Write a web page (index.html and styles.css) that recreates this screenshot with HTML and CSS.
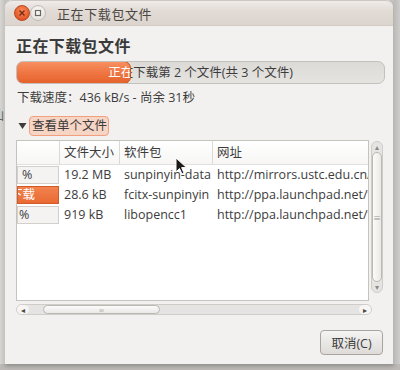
FILE: index.html
```html
<!DOCTYPE html>
<html>
<head>
<meta charset="utf-8">
<link rel="stylesheet" href="styles.css">
</head>
<body>
<div class="desk">
  <div class="side-left"><span class="ghost">汕</span></div>
  <div class="window">
    <div class="titlebar">
      <span class="wbtn close"><svg width="8" height="8" viewBox="0 0 8 8"><path d="M1.5 1.5 L6.5 6.5 M6.5 1.5 L1.5 6.5" stroke="#7a2a10" stroke-width="1.4"/></svg></span>
      <span class="wbtn other"><svg width="8" height="8" viewBox="0 0 8 8"><rect x="1.5" y="1.5" width="5" height="5" fill="none" stroke="#6a6662" stroke-width="1.2"/></svg></span>
      <span class="wtitle">正在下载包文件</span>
    </div>
    <div class="content">
      <div class="heading">正在下载包文件</div>
      <div class="bar">
        <div class="bar-label">正在下载第 2 个文件(共 3 个文件)</div>
        <div class="bar-fill"><div class="bar-label white">正在下载第 2 个文件(共 3 个文件)</div></div>
      </div>
      <div class="speed">下载速度：436 kB/s - 尚余 31秒</div>
      <div class="expander">
        <svg class="tri" width="9" height="8" viewBox="0 0 9 8"><path d="M0.5 1 L8.5 1 L4.5 7 Z" fill="#3c3c3c"/></svg>
        <span class="exp-label">查看单个文件</span>
      </div>
      <div class="tablearea">
        <div class="tablebox">
          <div class="row head">
            <div class="c c1"></div>
            <div class="c c2">文件大小</div>
            <div class="c c3">软件包</div>
            <div class="c c4">网址</div>
          </div>
          <div class="row">
            <div class="c c1"><span class="pcell">%</span></div>
            <div class="c c2">19.2 MB</div>
            <div class="c c3">sunpinyin-data</div>
            <div class="c c4">http://mirrors.ustc.edu.cn/ubuntu</div>
          </div>
          <div class="row">
            <div class="c c1"><span class="pcell orange">正在下载</span></div>
            <div class="c c2">28.6 kB</div>
            <div class="c c3">fcitx-sunpinyin</div>
            <div class="c c4">http://ppa.launchpad.net/fcitx</div>
          </div>
          <div class="row">
            <div class="c c1"><span class="pcell left">%</span></div>
            <div class="c c2">919 kB</div>
            <div class="c c3">libopencc1</div>
            <div class="c c4">http://ppa.launchpad.net/fcitx</div>
          </div>
        </div>
        <div class="vscroll">
          <div class="varrow">▴</div>
          <div class="vthumb"><span class="grip">≡</span></div>
          <div class="varrow">▾</div>
        </div>
      </div>
      <div class="hscroll">
        <div class="harrow">◂</div>
        <div class="htrack">
          <div class="hthumb"><span class="hgrip">ııı</span></div>
        </div>
        <div class="harrow">▸</div>
      </div>
      <div class="buttons">
        <button class="btn">取消(C)</button>
      </div>
    </div>
  </div>
  <div class="side-right"></div>
  <svg class="cursor" width="14" height="20" viewBox="0 0 14 20"><path d="M1 1 L1 15 L4.5 11.5 L7 17 L9 16 L6.6 10.6 L11.5 10.6 Z" fill="#1a1a1a" stroke="#ffffff" stroke-width="1"/></svg>
</div>
</body>
</html>
```

FILE: styles.css
```css
* { box-sizing: border-box; }
html, body { margin: 0; padding: 0; }
body {
  width: 400px;
  height: 370px;
  overflow: hidden;
  background: #bdbab7;
  font-family: "Open Sans", "Noto Sans CJK SC", sans-serif;
  color: #3c3c3c;
}
.desk {
  position: relative;
  display: flex;
  width: 400px;
  height: 370px;
  background: linear-gradient(#c9c7c5, #bcb9b6);
}
.side-left {
  width: 5px;
  height: 364px;
  background: linear-gradient(90deg, #d8d6d3, #c4c2bf);
  overflow: hidden;
  position: relative;
}
.ghost {
  display: block;
  margin-top: 104px;
  margin-left: -9px;
  font-size: 13px;
  color: #666;
}
.side-right {
  flex: 1;
  height: 364px;
  background: linear-gradient(90deg, #bcbab8, #cfcdcb);
}
.window {
  width: 389px;
  height: 364px;
  background: #f2f1f0;
  border-radius: 7px 7px 0 0;
  border-right: 1px solid #b9b5b1;
  box-shadow: 0 2px 4px rgba(0,0,0,0.25);
  display: flex;
  flex-direction: column;
  overflow: hidden;
}
.titlebar {
  height: 26px;
  flex: none;
  display: flex;
  align-items: center;
  padding-left: 9px;
  background: linear-gradient(#efece9, #e2dbd6 40%, #dcd4ce);
  border-bottom: 1px solid #d2cbc5;
  border-top: 1px solid #cdc7c2;
  border-radius: 7px 7px 0 0;
}
.wbtn {
  width: 16px;
  height: 16px;
  border-radius: 50%;
  display: flex;
  align-items: center;
  justify-content: center;
}
.close {
  background: radial-gradient(circle at 50% 35%, #f98a5a, #e4592a 70%, #c9461b);
  border: 1px solid #b8481e;
}
.other {
  background: radial-gradient(circle at 50% 35%, #fbfaf9, #e4e0dc 80%);
  border: 1px solid #c1bbb6;
}
.wtitle {
  margin-left: 11px;
  font-size: 13px;
  letter-spacing: 0.6px;
  color: #4a4642;
  font-family: "Noto Sans CJK SC", sans-serif;
}
.content {
  flex: 1;
  padding: 0 10px 0 11px;
  display: flex;
  flex-direction: column;
}
.heading {
  margin-top: 9px;
  height: 20px;
  line-height: 20px;
  font-size: 16px;
  font-weight: bold;
  letter-spacing: 0.4px;
  color: #3a3a3a;
  font-family: "Noto Sans CJK SC", sans-serif;
}
.bar {
  margin-top: 6px;
  height: 23px;
  width: 369px;
  position: relative;
  border: 1px solid #c4c0bc;
  border-radius: 7px;
  background: linear-gradient(#dcdad7, #e6e4e1);
  overflow: hidden;
}
.bar-label {
  width: 367px;
  height: 21px;
  line-height: 21px;
  text-align: center;
  font-size: 12.5px;
  color: #3c3c3c;
  white-space: nowrap;
}
.bar-label.white { color: #ffffff; }
.bar-fill {
  position: absolute;
  left: -1px;
  top: -1px;
  height: 23px;
  width: 115px;
  border: 1px solid #c9521f;
  border-radius: 7px;
  background: linear-gradient(#f7905f, #ef7643 50%, #e6632c);
  overflow: hidden;
}
.speed {
  margin-top: 5px;
  height: 17px;
  line-height: 17px;
  font-size: 12.5px;
  padding-left: 1px;
  white-space: nowrap;
}
.expander {
  margin-top: 10px;
  height: 20px;
  display: flex;
  align-items: center;
}
.tri { margin-left: 2px; margin-right: 2px; }
.exp-label {
  height: 20px;
  line-height: 18px;
  padding: 0 1px 0 2px;
  font-size: 12.5px;
  border: 1px solid #f0a07e;
  border-radius: 4px;
  background: #f7d5c5;
  color: #3c3c3c;
}
.tablearea {
  margin-top: 4px;
  display: flex;
  gap: 2px;
  height: 161px;
}
.tablebox {
  width: 356px;
  height: 161px;
  background: #ffffff;
  border: 1px solid #c6c2be;
  overflow: hidden;
}
.row {
  display: flex;
  height: 20px;
  line-height: 20px;
  font-size: 12.5px;
  white-space: nowrap;
}
.row.head {
  height: 24px;
  line-height: 24px;
  border-bottom: 1px solid #e2dfdc;
  background: linear-gradient(#ffffff, #f7f6f5);
}
.c {
  overflow: hidden;
  flex: none;
}
.head .c { border-right: 1px solid #dcd8d4; }
.c1 { width: 43px; }
.c2 { width: 60px; padding-left: 4px; }
.c3 { width: 93px; padding-left: 4px; }
.c4 { width: 200px; padding-left: 4px; }
.pcell {
  display: block;
  width: 42px;
  height: 18px;
  margin-top: 1px;
  line-height: 16px;
  border: 1px solid #d3d0cc;
  background: #f4f3f2;
  padding-left: 4px;
  overflow: hidden;
}
.pcell.left { padding-left: 1px; }
.pcell.orange {
  background: linear-gradient(#f2834f, #e96a33);
  border-color: #d35a26;
  color: #ffffff;
  padding-left: 0;
  text-indent: -33px;
}
.vscroll {
  width: 12px;
  height: 152px;
  margin-top: 1px;
  border: 1px solid #d0ccc8;
  border-radius: 6px;
  background: #e6e4e2;
  display: flex;
  flex-direction: column;
  align-items: center;
}
.varrow {
  height: 10px;
  line-height: 10px;
  font-size: 8px;
  color: #8c8884;
}
.vthumb {
  flex: 1;
  width: 10px;
  border: 1px solid #bcb8b4;
  border-radius: 5px;
  background: linear-gradient(90deg, #fbfbfa, #ebe9e7);
  display: flex;
  align-items: center;
  justify-content: center;
}
.grip { font-size: 8px; color: #9a9692; }
.hscroll {
  margin-top: 3px;
  width: 356px;
  height: 11px;
  border: 1px solid #d0ccc8;
  border-radius: 6px;
  background: #e6e4e2;
  display: flex;
  align-items: center;
}
.harrow {
  width: 12px;
  font-size: 8px;
  line-height: 9px;
  text-align: center;
  color: #4a4642;
  background: #f6f5f4;
  height: 9px;
  border-radius: 5px;
}
.htrack { flex: 1; height: 9px; padding-left: 14px; }
.hthumb {
  width: 117px;
  height: 9px;
  border: 1px solid #bcb8b4;
  border-radius: 5px;
  background: linear-gradient(#fbfbfa, #ebe9e7);
  display: flex;
  align-items: center;
  justify-content: center;
}
.hgrip { font-size: 6px; color: #9a9692; }
.buttons {
  margin-top: 15px;
  display: flex;
  justify-content: flex-end;
}
.btn {
  width: 63px;
  height: 25px;
  border: 1px solid #a9a49f;
  border-radius: 4px;
  background: linear-gradient(#f5f4f3, #dedbd8);
  font-family: "Open Sans", "Noto Sans CJK SC", sans-serif;
  font-size: 12.5px;
  color: #3c3c3c;
  padding: 0;
}
.cursor {
  position: absolute;
  left: 175px;
  top: 157px;
}
```
